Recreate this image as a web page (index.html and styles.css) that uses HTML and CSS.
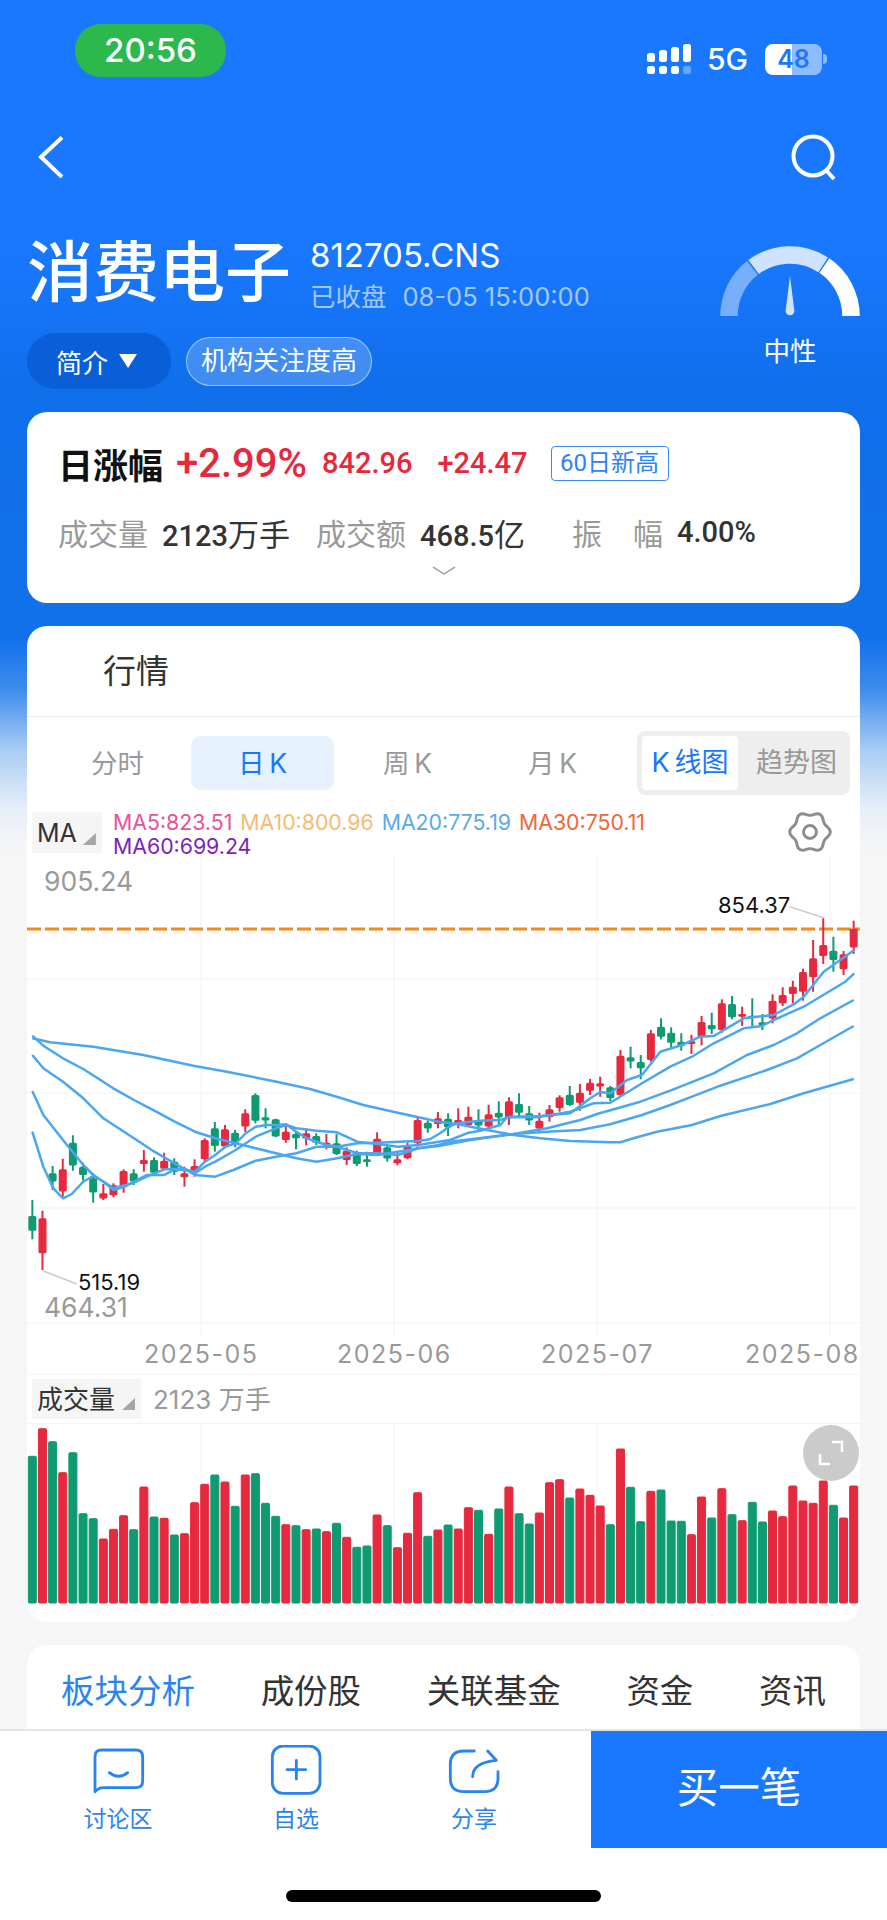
FILE: index.html
```html
<!DOCTYPE html>
<html>
<head>
    <meta charset="UTF-8">
    <meta name="viewport" content="width=device-width, initial-scale=1.0">
    <title>消费电子</title>
    <link rel="stylesheet" href="styles.css">
</head>
<body>
    <svg class="backdrop" viewBox="0 0 887 640" width="887" height="640">
        <path class="backdrop-thin" d="M533 410L588 380L610 390L633 393L647 383L681 281"/>
        <path class="backdrop-thick" d="M583 407L633 393L681 367L720 320L797 267"/>
        <path class="backdrop-rule" d="M700 240V412M500 365Q640 340 887 320"/>
        <circle class="backdrop-dot" cx="681" cy="281" r="11"/>
        <circle class="backdrop-dot" cx="681" cy="367" r="12"/>
        <circle class="backdrop-dot" cx="538" cy="408" r="6"/>
    </svg>

    <div class="status">
        <div class="clock">20:56</div>
        <div class="status-right">
            <svg class="signal" viewBox="649 43 45 32" width="45" height="32">
                <rect x="649" y="53" width="8" height="9" rx="2.5"/>
                <rect x="661" y="50" width="8" height="12" rx="2.5"/>
                <rect x="673" y="47" width="8" height="15" rx="2.5"/>
                <rect x="685" y="44" width="8" height="18" rx="2.5"/>
                <rect x="649" y="66" width="8" height="8" rx="2.5"/>
                <rect x="661" y="66" width="8" height="8" rx="2.5"/>
                <rect x="673" y="66" width="8" height="8" rx="2.5"/>
                <rect class="signal-off" x="685" y="66" width="8" height="8" rx="2.5"/>
            </svg>
            <span class="network">5G</span>
            <div class="battery">48</div>
            <div class="battery-nub"></div>
        </div>
    </div>

    <div class="nav">
        <svg viewBox="0 0 26 42" width="26" height="42">
            <path class="nav-icon" d="M24 1.5L3 21L24 41"/>
        </svg>
        <svg viewBox="0 0 46 46" width="46" height="46">
            <circle class="nav-icon" cx="22" cy="22" r="19.5"/>
            <path class="nav-icon" d="M35 36L43 45"/>
        </svg>
    </div>

    <div class="quote-head">
        <div>
            <div class="title-row">
                <h1 class="name">消费电子</h1>
                <div>
                    <div class="code">812705.CNS</div>
                    <div class="trade-state"><span>已收盘</span><span>08-05 15:00:00</span></div>
                </div>
            </div>
            <div class="pill-row">
                <div class="intro">简介<span class="intro-arrow"></span></div>
                <div class="focus-tag">机构关注度高</div>
            </div>
        </div>
        <div class="gauge">
            <svg viewBox="0 0 140 72" width="140" height="72">
                <path class="gauge-low" d="M9 71A61 61 0 0 1 32.4 22.9"/>
                <path class="gauge-mid" d="M33.6 22A61 61 0 0 1 103.2 19.8"/>
                <path class="gauge-high" d="M104.4 20.6A61 61 0 0 1 131 71"/>
                <path class="gauge-needle" d="M70 31L74.3 65A4.4 4.4 0 1 1 65.7 65Z"/>
            </svg>
            <div class="gauge-label">中性</div>
        </div>
    </div>

    <div class="card summary">
        <div class="summary-top">
            <span class="summary-name">日涨幅</span>
            <span class="summary-pct">+2.99%</span>
            <span class="summary-price">842.96</span>
            <span class="summary-change">+24.47</span>
            <span class="summary-tag">60日新高</span>
        </div>
        <div class="summary-stats">
            <div class="stat"><span class="stat-label">成交量</span><span class="stat-value">2123<span class="stat-unit">万手</span></span></div>
            <div class="stat"><span class="stat-label">成交额</span><span class="stat-value">468.5<span class="stat-unit">亿</span></span></div>
            <div class="stat stat-wide"><span class="stat-label stat-spread"><i>振</i><i>幅</i></span><span class="stat-value">4.00%</span></div>
        </div>
        <svg class="summary-more" viewBox="0 0 24 9" width="24" height="9">
            <path d="M1 1L12 8L23 1"/>
        </svg>
    </div>

    <div class="card market">
        <div class="market-title">行情</div>
        <div class="period-row">
            <div class="period">分时</div>
            <div class="period period-on">日&#8201;K</div>
            <div class="period">周&#8201;K</div>
            <div class="period">月&#8201;K</div>
            <div class="chart-switch">
                <div class="switch-item switch-on">K&#8201;线图</div>
                <div class="switch-item">趋势图</div>
            </div>
        </div>
        <div class="ma-row">
            <div class="ma-box">MA<span class="corner"></span></div>
            <div class="ma-values">
                <span class="ma5">MA5:823.51</span>
                <span class="ma10">MA10:800.96</span>
                <span class="ma20">MA20:775.19</span>
                <span class="ma30">MA30:750.11</span>
                <span class="ma60">MA60:699.24</span>
            </div>
            <svg class="gear" viewBox="-26 -26 52 52" width="48" height="48">
                <path d="M0 -18C4.5 -18 7.1 -21.3 11 -19.05C14.9 -16.8 13.34 -12.9 15.59 -9C17.84 -5.1 22 -4.5 22 0C22 4.5 17.84 5.1 15.59 9C13.34 12.9 14.9 16.8 11 19.05C7.1 21.3 4.5 18 0 18C-4.5 18 -7.1 21.3 -11 19.05C-14.9 16.8 -13.34 12.9 -15.59 9C-17.84 5.1 -22 4.5 -22 0C-22 -4.5 -17.84 -5.1 -15.59 -9C-13.34 -12.9 -14.9 -16.8 -11 -19.05C-7.1 -21.3 -4.5 -18 0 -18Z"/>
                <circle r="7"/>
            </svg>
        </div>
        <svg id="kline" class="chart" viewBox="27 855 833 519" width="833" height="519">
            <path class="grid" d="M201 855V1337M394 855V1337M597 855V1337M830 855V1337M27 979H860M27 1093H860M27 1208H860M27 1323H860"/>
            <path class="high-line" d="M27 929H860"/>
            <path class="leader" d="M42.7 1270.7L77 1284M789.7 906.7L823.7 917.7"/>
            <text class="axis-text" x="44" y="891">905.24</text>
            <text class="axis-text" x="44" y="1316.7">464.31</text>
            <text class="mark-text" x="78" y="1290">515.19</text>
            <text class="mark-text" x="718" y="912.7">854.37</text>
            <text class="axis-text date-text" x="144" y="1363">2025-05</text>
            <text class="axis-text date-text" x="337" y="1363">2025-06</text>
            <text class="axis-text date-text" x="541" y="1363">2025-07</text>
            <text class="axis-text date-text" x="745" y="1363">2025-08</text>
        </svg>
        <div class="volume-head">
            <div class="volume-box">成交量<span class="corner"></span></div>
            <div class="volume-value">2123 万手</div>
        </div>
        <div class="volume-wrap">
            <svg id="volume" class="chart" viewBox="27 1424 833 198" width="833" height="198">
                <path class="grid" d="M201 1424V1603M394 1424V1603M597 1424V1603M830 1424V1603"/>
            </svg>
            <div class="expand">
                <svg viewBox="0 0 28 28" width="28" height="28">
                    <path d="M15 3H25V13M3 15V25H13"/>
                </svg>
            </div>
        </div>
    </div>

    <div class="card sections">
        <span class="section section-on">板块分析</span>
        <span class="section">成份股</span>
        <span class="section">关联基金</span>
        <span class="section">资金</span>
        <span class="section">资讯</span>
    </div>

    <div class="bottom-bar">
        <div class="actions">
            <div class="action">
                <svg viewBox="60 30 165 150" width="55" height="50">
                    <path d="M72 170V65Q72 45 92 45H195Q215 45 215 65V138Q215 158 195 158H95Q85 158 72 170Z"/>
                    <path d="M115 113Q143 135 170 113"/>
                </svg>
                <span>讨论区</span>
            </div>
            <div class="action">
                <svg viewBox="595 30 165 150" width="55" height="50">
                    <rect x="605" y="33" width="143" height="142" rx="32"/>
                    <path d="M677 76V132M649 104H705"/>
                </svg>
                <span>自选</span>
            </div>
            <div class="action">
                <svg viewBox="1130 30 165 150" width="55" height="50">
                    <path d="M1212 48H1180Q1140 48 1140 88V130Q1140 170 1180 170H1243Q1283 170 1283 130V110"/>
                    <path d="M1207 125Q1207 82 1278 76L1252 48"/>
                </svg>
                <span>分享</span>
            </div>
        </div>
        <div class="buy">买一笔</div>
        <div class="home-bar"></div>
    </div>

    <script src="chart.js"></script>
</body>
</html>
```

FILE: styles.css
```css
* {
    box-sizing: border-box;
}

html {
    background: #f6f6f6;
}

body {
    position: relative;
    overflow: hidden;
    width: 887px;
    height: 1920px;
    margin: 0;
    font-family: Inter, "Noto Sans CJK SC", sans-serif;
    background: linear-gradient(to bottom, #1a78ff 0, #1a78ff 240px, #0f6ee9 400px, #1272ea 640px, #3f8dee 690px, #a9ccf5 750px, #e8eff8 810px, #f6f6f6 850px);
}

svg {
    display: block;
}

.backdrop {
    position: absolute;
    top: 0;
    left: 0;
    z-index: -1;
}

.backdrop path {
    fill: none;
    stroke-linecap: round;
}

.backdrop-thin {
    stroke: rgba(255, 255, 255, 0.1);
    stroke-width: 4;
}

.backdrop-thick {
    stroke: rgba(255, 255, 255, 0.12);
    stroke-width: 7;
}

.backdrop-rule {
    stroke: rgba(255, 255, 255, 0.04);
    stroke-width: 3;
}

.backdrop-dot {
    fill: rgba(255, 255, 255, 0.16);
}

/* status bar */
.status {
    display: flex;
    justify-content: space-between;
    height: 132px;
    padding: 24px 60px 0 75px;
}

.clock {
    width: 151px;
    height: 53px;
    border-radius: 26px;
    background: #2db84d;
    color: #fff;
    font-size: 33px;
    font-weight: 500;
    line-height: 53px;
    text-align: center;
}

.status-right {
    display: flex;
    align-items: center;
    height: 32px;
    margin-top: 19px;
}

.signal {
    fill: #fff;
    margin-right: 15px;
}

.signal-off {
    fill: rgba(255, 255, 255, 0.35);
}

.network {
    margin-right: 17px;
    color: #fff;
    font-size: 30px;
    font-weight: 500;
}

.battery {
    width: 57px;
    height: 31px;
    border-radius: 8px;
    background: linear-gradient(to right, #fff 47%, rgba(255, 255, 255, 0.5) 47%);
    color: #1a78ff;
    font-size: 25px;
    font-weight: 600;
    line-height: 31px;
    text-align: center;
}

.battery-nub {
    width: 4px;
    height: 10px;
    margin-left: 1px;
    border-radius: 0 4px 4px 0;
    background: rgba(255, 255, 255, 0.5);
}

/* nav */
.nav {
    display: flex;
    align-items: center;
    justify-content: space-between;
    height: 50px;
    padding: 0 50px 0 38px;
}

.nav-icon {
    fill: none;
    stroke: #fff;
    stroke-width: 4;
}

/* head */
.quote-head {
    display: flex;
    justify-content: space-between;
    margin: 58px 27px 23px;
}

.title-row {
    display: flex;
    height: 93px;
}

.name {
    margin: 0 19px 0 0;
    color: #fff;
    font-size: 66px;
    font-weight: 500;
    line-height: 64px;
    white-space: nowrap;
}

.code {
    color: #fff;
    font-size: 33px;
    line-height: 30px;
}

.trade-state {
    display: flex;
    gap: 16px;
    margin-top: 12px;
    color: rgba(255, 255, 255, 0.62);
    font-size: 25.5px;
    line-height: 30px;
    white-space: nowrap;
}

.pill-row {
    display: flex;
    align-items: center;
    gap: 15px;
}

.intro {
    display: flex;
    align-items: center;
    width: 144px;
    height: 56px;
    padding-left: 29px;
    border-radius: 28px;
    background: #0a5ed8;
    color: #fff;
    font-size: 26px;
}

.intro-arrow {
    width: 18px;
    height: 14px;
    margin-left: 11px;
    background: #fff;
    clip-path: polygon(0 0, 100% 0, 50% 100%);
}

.focus-tag {
    height: 49px;
    padding: 0 14px;
    border: 1px solid rgba(255, 255, 255, 0.5);
    border-radius: 25px;
    background: rgba(255, 255, 255, 0.2);
    color: #fff;
    font-size: 26px;
    line-height: 46px;
    white-space: nowrap;
}

.gauge {
    width: 140px;
    padding-top: 5px;
}

.gauge path {
    fill: none;
    stroke-width: 17.5;
}

.gauge-low {
    stroke: rgba(255, 255, 255, 0.42);
}

.gauge-mid {
    stroke: #cfe2ff;
}

.gauge-high {
    stroke: #fff;
}

.gauge .gauge-needle {
    fill: #cfe2ff;
    stroke: none;
}

.gauge-label {
    margin-top: 16px;
    color: #fff;
    font-size: 26.5px;
    line-height: 36px;
    text-align: center;
}

/* cards */
.card {
    width: 833px;
    margin: 0 27px 23px;
    border-radius: 20px;
    background: #fff;
}

.summary {
    display: flex;
    flex-direction: column;
    height: 191px;
    padding-top: 26px;
}

.summary-top {
    display: flex;
    align-items: center;
    height: 50px;
    padding-left: 31px;
    font-family: Roboto, "Noto Sans CJK SC", sans-serif;
    white-space: nowrap;
}

.summary-name {
    margin-right: 13px;
    color: #111;
    font-size: 35px;
    font-weight: 700;
}

.summary-pct {
    margin-right: 15px;
    color: #e6283c;
    font-size: 40px;
    font-weight: 500;
}

.summary-price,
.summary-change {
    color: #e6283c;
    font-size: 29px;
    font-weight: 500;
}

.summary-price {
    margin-right: 25px;
}

.summary-change {
    margin-right: 23px;
}

.summary-tag {
    width: 118px;
    height: 35px;
    border: 1px solid #3a8bf3;
    border-radius: 4px;
    color: #2b83f6;
    font-size: 24px;
    line-height: 32px;
    text-align: center;
}

.summary-stats {
    display: flex;
    align-items: center;
    height: 50px;
    margin-top: 19px;
    padding-left: 31px;
}

.stat {
    display: flex;
    align-items: center;
    gap: 14px;
    margin-right: 26px;
    white-space: nowrap;
}

.stat-wide {
    margin-left: 21px;
}

.stat-label {
    color: #999;
    font-size: 30px;
}

.stat-spread {
    display: flex;
    justify-content: space-between;
    width: 91px;
}

.stat-spread i {
    font-style: normal;
}

.stat-value {
    color: #333;
    font-family: Roboto, "Noto Sans CJK SC", sans-serif;
    font-size: 29px;
    font-weight: 500;
}

.stat-unit {
    font-size: 31px;
    font-weight: 400;
}

.summary-more {
    margin: 9px auto 0;
    fill: none;
    stroke: #aaa;
    stroke-width: 1.5;
}

.market {
    height: 996px;
}

.market-title {
    height: 91px;
    padding-left: 76px;
    border-bottom: 1px solid #eee;
    color: #333;
    font-size: 33px;
    line-height: 90px;
}

.period-row {
    display: flex;
    align-items: center;
    gap: 2px;
    height: 91px;
    padding: 0 10px 0 19px;
}

.period {
    width: 143px;
    height: 54px;
    border-radius: 10px;
    color: #999;
    font-size: 26.5px;
    line-height: 54px;
    text-align: center;
}

.period-on {
    background: #e6f1fe;
    color: #1677ff;
}

.chart-switch {
    display: flex;
    width: 213px;
    height: 64px;
    margin-left: 11px;
    padding: 5px;
    border-radius: 8px;
    background: #eee;
}

.switch-item {
    flex: 1;
    padding-left: 10px;
    color: #999;
    font-size: 27px;
    line-height: 54px;
    text-align: center;
    white-space: nowrap;
}

.switch-on {
    flex: none;
    width: 96px;
    padding-left: 0;
    border-radius: 4px;
    background: #fff;
    color: #1677ff;
}

.ma-row {
    display: flex;
    height: 47px;
    padding-left: 5px;
}

.ma-box {
    display: flex;
    width: 70px;
    height: 41px;
    margin-top: 4px;
    padding-left: 5px;
    background: #f5f5f5;
    color: #333;
    font-size: 25px;
    line-height: 42px;
}

.corner {
    width: 13px;
    height: 12px;
    margin: 21px 0 0 6px;
    background: #a5a5a5;
    clip-path: polygon(100% 0, 100% 100%, 0 100%);
}

.ma-values {
    display: flex;
    flex-wrap: wrap;
    column-gap: 8px;
    width: 540px;
    margin-left: 11px;
    padding-top: 2px;
    font-size: 21.3px;
    line-height: 24px;
    white-space: nowrap;
}

.ma5 {
    color: #ec4f9b;
}

.ma10 {
    color: #f6bb72;
}

.ma20 {
    color: #5aaae8;
}

.ma30 {
    color: #f2653a;
}

.ma60 {
    color: #7c1fc0;
}

.gear {
    margin: 0 0 0 133px;
    fill: none;
    stroke: #8c8c8c;
    stroke-width: 3.2;
    stroke-linejoin: round;
}

.grid {
    fill: none;
    stroke: #f3f3f3;
    stroke-width: 1;
}

.high-line {
    fill: none;
    stroke: #f08a1d;
    stroke-width: 3;
    stroke-dasharray: 14 4;
}

.leader {
    fill: none;
    stroke: #ccc;
    stroke-width: 1.5;
}

.axis-text {
    fill: #999;
    font-size: 26.5px;
}

.date-text {
    font-size: 25px;
    letter-spacing: 1.5px;
}

.mark-text {
    fill: #111;
    font-size: 22px;
}

.up {
    fill: #e6293e;
    stroke: #e6293e;
}

.down {
    fill: #0f9b72;
    stroke: #0f9b72;
}

.ma-line {
    fill: none;
    stroke: #4ba6f2;
    stroke-width: 2.5;
    stroke-linejoin: round;
}

.volume-head {
    display: flex;
    align-items: center;
    height: 50px;
    padding-left: 5px;
    border-top: 1px solid #f3f3f3;
    border-bottom: 1px solid #f3f3f3;
}

.volume-box {
    display: flex;
    width: 109px;
    height: 40px;
    padding-left: 5px;
    background: #f5f5f5;
    color: #333;
    font-size: 26px;
    line-height: 42px;
    white-space: nowrap;
}

.volume-box .corner {
    margin: 19px 0 0 7px;
}

.volume-value {
    margin: -3px 0 0 12px;
    color: #999;
    font-size: 26px;
}

.volume-wrap {
    position: relative;
}

.expand {
    position: absolute;
    top: 1px;
    right: 1px;
    display: flex;
    align-items: center;
    justify-content: center;
    width: 56px;
    height: 56px;
    border-radius: 50%;
    background: rgba(190, 190, 190, 0.8);
}

.expand path {
    fill: none;
    stroke: #fff;
    stroke-width: 2.5;
}

.sections {
    display: flex;
    justify-content: space-between;
    height: 200px;
    padding: 28px 34px 0;
}

.section {
    color: #333;
    font-size: 33.5px;
    line-height: 36px;
}

.section-on {
    color: #2a84f0;
}

/* bottom bar */
.bottom-bar {
    position: absolute;
    top: 1729px;
    left: 0;
    display: flex;
    width: 887px;
    height: 191px;
    border-top: 2px solid #e5e5e5;
    background: #fff;
}

.actions {
    display: flex;
    width: 591px;
    padding: 14px 0 0 29px;
}

.action {
    display: flex;
    flex-direction: column;
    align-items: center;
    width: 178px;
    color: #2a84f0;
    font-size: 23px;
    line-height: 32px;
}

.action svg {
    margin-bottom: 8px;
    fill: none;
    stroke: #2a84f0;
    stroke-width: 8.5;
    stroke-linecap: round;
    stroke-linejoin: round;
}

.buy {
    width: 296px;
    height: 117px;
    background: #1a78ff;
    color: #fff;
    font-size: 41.5px;
    line-height: 115px;
    text-align: center;
}

.home-bar {
    position: absolute;
    left: 286px;
    bottom: 18px;
    width: 315px;
    height: 12px;
    border-radius: 6px;
    background: #000;
}
```

FILE: chart.js
```js
// values below are read in 3x units, px = value / 3
const candles = [
    ['down', 960, 1008, 1052, 1078], ['up', 992, 1015, 1120, 1170], ['down', 858, 880, 905, 930],
    ['up', 836, 868, 935, 950], ['down', 766, 788, 856, 872], ['down', 848, 860, 885, 902],
    ['down', 880, 895, 938, 968], ['up', 912, 940, 956, 960], ['up', 910, 916, 946, 952],
    ['up', 868, 873, 922, 938], ['down', 868, 880, 905, 915], ['up', 810, 840, 852, 875],
    ['down', 832, 840, 878, 880], ['up', 818, 842, 866, 870], ['down', 835, 845, 875, 885],
    ['up', 860, 880, 892, 920], ['up', 838, 858, 875, 890], ['up', 775, 780, 838, 845],
    ['down', 726, 745, 798, 815], ['up', 735, 748, 800, 805], ['down', 750, 758, 788, 802],
    ['up', 688, 700, 740, 756], ['down', 640, 645, 722, 730], ['down', 685, 712, 722, 745],
    ['down', 716, 718, 770, 772], ['up', 735, 755, 780, 788], ['down', 755, 762, 775, 808],
    ['up', 745, 760, 776, 796], ['down', 760, 768, 788, 795], ['up', 762, 788, 796, 808],
    ['down', 762, 790, 822, 825], ['up', 802, 812, 840, 855], ['down', 812, 818, 852, 858],
    ['down', 815, 838, 846, 860], ['up', 757, 776, 820, 825], ['down', 795, 802, 836, 845],
    ['up', 820, 838, 850, 856], ['up', 788, 798, 835, 838], ['up', 708, 720, 790, 800],
    ['down', 722, 728, 745, 758], ['up', 696, 715, 732, 745], ['down', 700, 716, 742, 768],
    ['up', 685, 720, 735, 745], ['up', 680, 710, 735, 740], ['down', 688, 722, 736, 752],
    ['up', 674, 703, 740, 745], ['down', 664, 698, 712, 732], ['up', 652, 664, 715, 735],
    ['down', 640, 672, 698, 712], ['down', 678, 700, 722, 735], ['up', 698, 722, 745, 760],
    ['up', 675, 688, 712, 725], ['up', 646, 652, 684, 695], ['down', 618, 644, 675, 678],
    ['up', 612, 638, 668, 692], ['up', 597, 608, 632, 645], ['up', 590, 610, 620, 650],
    ['down', 618, 622, 654, 664], ['up', 510, 527, 645, 650], ['down', 500, 532, 545, 565],
    ['down', 525, 546, 565, 598], ['up', 450, 460, 540, 545], ['down', 415, 440, 470, 478],
    ['down', 442, 458, 488, 508], ['down', 460, 485, 496, 512], ['up', 464, 484, 492, 522],
    ['up', 408, 426, 470, 496], ['down', 398, 435, 448, 462], ['up', 358, 370, 450, 458],
    ['down', 348, 372, 412, 418], ['up', 380, 402, 410, 438], ['down', 355, 407, 413, 438],
    ['down', 402, 427, 435, 450], ['up', 343, 362, 415, 430], ['up', 322, 345, 370, 378],
    ['up', 302, 320, 342, 370], ['up', 266, 276, 335, 362], ['up', 180, 235, 292, 335],
    ['up', 115, 195, 228, 252], ['down', 170, 212, 240, 275], ['up', 213, 223, 268, 285],
    ['up', 122, 146, 202, 222]
];

const volumeTops = [
    348, 265, 304, 397, 337, 520, 535, 596, 567, 526, 568, 440, 530, 534, 584, 580, 487, 432, 404, 425, 498,
    404, 400, 489, 528, 553, 556, 568, 566, 574, 549, 591, 621, 617, 524, 556, 622, 579, 457, 588, 569, 554,
    566, 502, 510, 582, 506, 440, 520, 551, 518, 427, 418, 473, 446, 465, 497, 553, 326, 441, 544, 453, 449,
    542, 543, 583, 470, 533, 445, 523, 541, 486, 545, 512, 529, 437, 482, 489, 422, 495, 533, 437
];

const maLines = [
    '97,755 130,860 160,925 189,955 215,942 250,905 280,887 310,905 341,930 372,920 402,905 440,885 493,885 524,868 554,870 585,875 615,845 646,825 676,800 707,790 737,760 767,740 798,735 828,735 859,733 889,755 920,775 950,785 980,795 1011,800 1072,790 1133,788 1194,785 1255,783 1290,778 1320,760 1350,738 1371,730 1441,722 1501,720 1531,710 1621,708 1711,700 1771,655 1801,636 1831,640 1881,600 1926,585 1981,515 2046,495 2101,470 2141,468 2231,415 2321,405 2386,370 2411,350 2471,275 2563,210',
    '97,633 130,705 189,780 250,855 280,885 341,925 402,908 440,890 493,868 554,866 585,880 615,860 646,845 707,810 767,770 828,745 859,735 889,745 950,752 1011,757 1072,785 1133,792 1194,800 1255,795 1316,785 1350,780 1406,758 1441,752 1501,735 1521,712 1611,712 1711,695 1781,670 1831,668 1926,610 2011,560 2076,530 2141,490 2231,445 2286,438 2321,420 2411,380 2536,305 2563,280',
    '97,525 130,565 189,605 250,655 310,715 402,775 463,815 524,850 585,885 646,890 700,870 767,842 828,830 889,820 950,800 1011,800 1072,820 1133,820 1194,825 1255,805 1316,795 1350,785 1541,762 1641,745 1741,720 1791,702 1921,665 2011,632 2141,580 2241,525 2321,495 2391,460 2461,415 2561,360',
    '97,467 130,497 189,535 250,567 340,625 402,660 463,692 524,725 585,755 646,775 707,790 767,805 828,820 889,835 950,845 1011,835 1072,822 1133,825 1194,815 1255,805 1316,798 1411,780 1541,762 1641,755 1741,750 1831,733 1926,705 2011,675 2076,650 2161,617 2301,570 2391,535 2461,495 2561,438',
    '97,475 150,487 280,500 430,525 580,557 680,575 830,605 930,627 1010,650 1090,675 1180,695 1255,712 1316,725 1375,733 1461,750 1541,765 1621,775 1711,783 1831,787 1861,787 1911,772 1971,755 2076,735 2161,708 2311,672 2411,640 2561,597'
];

function toY(v) {
    return (880 + v / 3).toFixed(1);
}

function centerX(i) {
    return (97 + i * 30.42) / 3;
}

let klineHtml = '';
candles.forEach(function(c, i) {
    const x = centerX(i);
    klineHtml += '<g class="' + c[0] + '">';
    klineHtml += '<line x1="' + x + '" x2="' + x + '" y1="' + toY(c[1]) + '" y2="' + toY(c[4]) + '" stroke-width="2"/>';
    klineHtml += '<rect x="' + (x - 4) + '" y="' + toY(c[2]) + '" width="8" height="' + ((c[3] - c[2]) / 3).toFixed(1) + '" rx="1.5" stroke="none"/>';
    klineHtml += '</g>';
});

maLines.forEach(function(line) {
    const points = line.split(' ').map(function(p) {
        const xy = p.split(',');
        return (xy[0] / 3).toFixed(1) + ',' + toY(+xy[1]);
    });
    klineHtml += '<polyline class="ma-line" points="' + points.join(' ') + '"/>';
});

document.getElementById('kline').insertAdjacentHTML('beforeend', klineHtml);

let volumeHtml = '';
volumeTops.forEach(function(top, i) {
    const height = (788 - top) / 3;
    const y = 1603 - height;
    volumeHtml += '<rect class="' + candles[i][0] + '" x="' + (centerX(i) - 4) + '" y="' + y.toFixed(1) + '" width="8" height="' + height.toFixed(1) + '" rx="1" stroke="none"/>';
});

document.getElementById('volume').insertAdjacentHTML('beforeend', volumeHtml);
```
